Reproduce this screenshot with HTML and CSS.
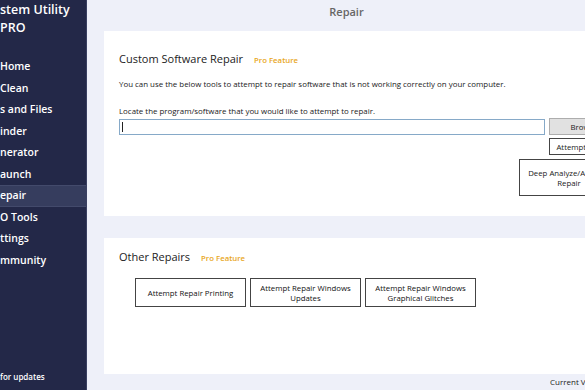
FILE: index.html
```html
<!DOCTYPE html>
<html lang="en">
<head>
  <meta charset="UTF-8" />
  <title>System Utility PRO - Repair</title>
  <link rel="stylesheet" href="styles.css">
</head>
<body>
  <div class="app">
    <div class="sidebar">
      <div class="brand">
        <div>stem Utility</div>
        <div>PRO</div>
      </div>
      <ul class="menu">
        <li>Home</li>
        <li>Clean</li>
        <li>s and Files</li>
        <li>inder</li>
        <li>nerator</li>
        <li>aunch</li>
        <li class="active">epair</li>
        <li>O Tools</li>
        <li>ttings</li>
        <li>mmunity</li>
      </ul>
      <div class="updates">for updates</div>
    </div>

    <div class="main">
      <div class="page-title">Repair</div>

      <div class="card card-custom">
        <div class="card-head">
          <span class="card-title">Custom Software Repair</span>
          <span class="pro">Pro Feature</span>
        </div>
        <p class="note">You can use the below tools to attempt to repair software that is not working correctly on your computer.</p>
        <p class="note locate">Locate the program/software that you would like to attempt to repair.</p>
        <div class="browse-row">
          <div class="path-input"><span class="caret"></span></div>
          <button class="btn btn-grey">Browse</button>
        </div>
        <div class="actions">
          <button class="btn btn-small">Attempt Repair</button>
          <button class="btn btn-deep">Deep Analyze/Attempt Repair</button>
        </div>
      </div>

      <div class="card card-other">
        <div class="card-head">
          <span class="card-title">Other Repairs</span>
          <span class="pro">Pro Feature</span>
        </div>
        <div class="repair-buttons">
          <button class="btn btn-repair">Attempt Repair Printing</button>
          <button class="btn btn-repair">Attempt Repair Windows Updates</button>
          <button class="btn btn-repair">Attempt Repair Windows Graphical Glitches</button>
        </div>
      </div>

      <div class="version">Current Version</div>
    </div>
  </div>
</body>
</html>
```

FILE: styles.css
```css
body {
  margin: 0;
  width: 585px;
  height: 390px;
  overflow: hidden;
  font-family: 'Open Sans', 'Noto Sans', sans-serif;
  background: #eef0f9;
}

.app {
  display: flex;
  height: 390px;
}

.sidebar {
  width: 86px;
  flex-shrink: 0;
  background: #232848;
  color: #fff;
  display: flex;
  flex-direction: column;
  border-right: 1px solid #3a4062;
  white-space: nowrap;
  overflow: hidden;
}

.brand {
  font-size: 12.5px;
  font-weight: 600;
  line-height: 18px;
  padding-top: 1px;
}

.menu {
  list-style: none;
  margin: 0;
  padding: 0;
  margin-top: 19px;
  font-size: 10.5px;
  font-weight: 600;
}

.menu li {
  height: 21.5px;
  line-height: 21.5px;
}

.menu li.active {
  background: #363d5e;
  border-top: 1px solid #434a6b;
  border-bottom: 1px solid #434a6b;
  line-height: 19.5px;
  height: 19.5px;
}

.updates {
  margin-top: auto;
  font-size: 8px;
  font-weight: 600;
  padding-bottom: 8px;
}

.main {
  width: 560px;
  flex-shrink: 0;
  padding-left: 17px;
}

.page-title {
  width: 485px;
  text-align: center;
  color: #666;
  font-size: 11px;
  font-weight: 600;
  height: 31px;
  line-height: 24px;
}

.card {
  background: #fff;
  width: 522px;
  box-sizing: border-box;
  padding: 0 0 0 15px;
}

.card-custom {
  height: 185px;
  padding-top: 20px;
}

.card-other {
  height: 136px;
  margin-top: 22px;
  padding-top: 11px;
}

.card-head {
  display: flex;
  align-items: baseline;
  gap: 11px;
}

.card-title {
  font-size: 11px;
  color: #222;
}

.pro {
  font-size: 7.8px;
  font-weight: 600;
  color: #e8a61c;
}

.note {
  margin: 0;
  font-size: 7.9px;
  color: #1a1a1a;
}

.card-custom .note {
  margin-top: 13px;
}

.card-custom .note.locate {
  margin-top: 17px;
}

.browse-row {
  display: flex;
  gap: 4px;
  margin-top: 3px;
  margin-right: 7px;
  align-items: flex-start;
}

.path-input {
  flex: 1;
  height: 14px;
  border: 1px solid #86a9c8;
  display: flex;
  align-items: center;
  padding-left: 2px;
}

.caret {
  width: 1px;
  height: 10px;
  background: #222;
}

.btn {
  font-family: 'Open Sans', 'Noto Sans', sans-serif;
  font-size: 7.8px;
  color: #1a1a1a;
  background: #fff;
  border: 1px solid #444;
  padding: 0;
  line-height: 10px;
}

.btn-grey {
  width: 70px;
  height: 17px;
  margin-top: -1px;
  background: #e1e1e1;
  border-color: #adadad;
}

.actions {
  display: flex;
  flex-direction: column;
  align-items: flex-end;
  gap: 4px;
  margin-top: 3px;
  margin-right: 7px;
}

.btn-small {
  width: 70px;
  height: 17px;
}

.btn-deep {
  width: 100px;
  height: 37px;
  padding: 0 6px;
}

.repair-buttons {
  display: flex;
  gap: 4px;
  margin-top: 14px;
  padding-left: 16px;
}

.btn-repair {
  width: 111px;
  height: 29px;
  padding: 0 6px;
  color: #111;
}

.version {
  padding-left: 446px;
  font-size: 8px;
  color: #222;
  line-height: 16px;
}
```
